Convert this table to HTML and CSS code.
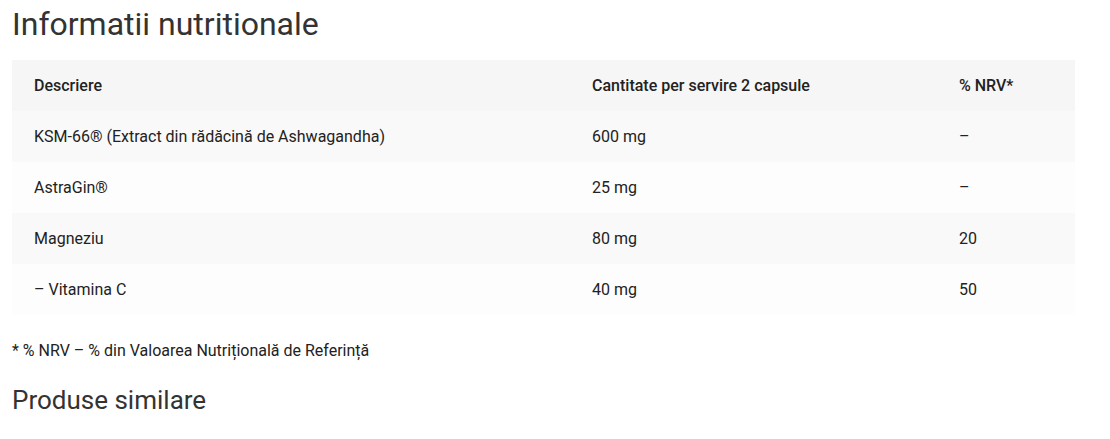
FILE: index.html
```html
<!DOCTYPE html>
<html lang="ro">
<head>
<meta charset="utf-8">
<link rel="stylesheet" href="styles.css">
</head>
<body>
<div class="page">
  <h2 class="title">Informatii nutritionale</h2>
  <table class="nutri">
    <thead>
      <tr><th class="c1">Descriere</th><th class="c2">Cantitate per servire 2 capsule</th><th class="c3">% NRV*</th></tr>
    </thead>
    <tbody>
      <tr><td>KSM-66® (Extract din rădăcină de Ashwagandha)</td><td>600 mg</td><td>–</td></tr>
      <tr><td>AstraGin®</td><td>25 mg</td><td>–</td></tr>
      <tr><td>Magneziu</td><td>80 mg</td><td>20</td></tr>
      <tr><td>– Vitamina C</td><td>40 mg</td><td>50</td></tr>
    </tbody>
  </table>
  <p class="note">* % NRV – % din Valoarea Nutrițională de Referință</p>
  <h3 class="subtitle">Produse similare</h3>
</div>
</body>
</html>
```
FILE: styles.css
```css
html, body {
  margin: 0;
  padding: 0;
  background: #fff;
}
body {
  font-family: Roboto, "Noto Sans", Arial, sans-serif;
  color: #222;
}
.page {
  padding: 0 35px 0 12px;
}
.title {
  margin: 0;
  padding-top: 4px;
  font-size: 32px;
  font-weight: 400;
  line-height: 40px;
  color: #333;
}
.nutri {
  margin-top: 16px;
  width: 1063px;
  border-collapse: collapse;
  font-size: 16px;
  table-layout: fixed;
}
.nutri th, .nutri td {
  height: 51px;
  padding: 0 22px;
  text-align: left;
  vertical-align: middle;
  box-sizing: border-box;
}
.nutri th {
  font-weight: 500;
  background: #f6f6f6;
}
.nutri td {
  font-weight: 400;
}
.c1 { width: 558px; }
.c2 { width: 367px; }
.nutri tbody tr:nth-child(odd) { background: #f9f9f9; }
.nutri tbody tr:nth-child(even) { background: #fdfdfd; }
.note {
  margin: 26px 0 0;
  font-size: 16px;
  line-height: 20px;
}
.subtitle {
  margin: 21px 0 0;
  font-size: 26px;
  font-weight: 400;
  line-height: 36px;
  color: #333;
}
```
